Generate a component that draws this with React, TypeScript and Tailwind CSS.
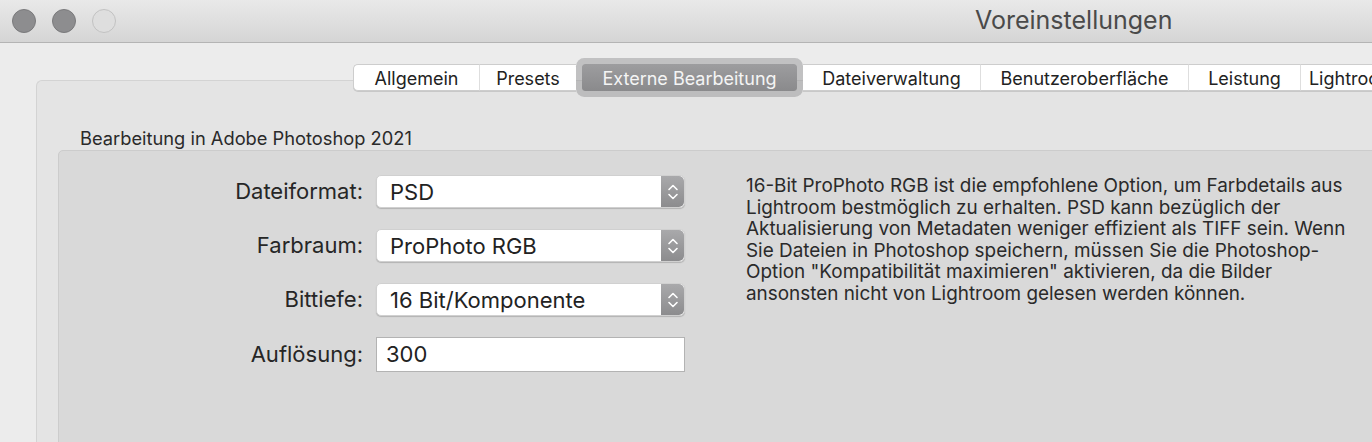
import React from "react";

const tabs: { label: string; w: string; active?: boolean }[] = [
  { label: "Allgemein", w: "w-[126px]" },
  { label: "Presets", w: "w-[97px]" },
  { label: "Externe Bearbeitung", w: "w-[215px]", active: true },
  { label: "Dateiverwaltung", w: "w-[177px]" },
  { label: "Benutzeroberfläche", w: "w-[208px]" },
  { label: "Leistung", w: "w-[112px]" },
  { label: "Lightroom-Synchronisierung", w: "w-[260px]" },
];

function Stepper() {
  return (
    <div className="w-[23px] self-stretch flex items-center justify-center rounded-r-[5px] bg-gradient-to-b from-[#a9a9ab] to-[#8c8c8e]">
      <svg width="12" height="20" viewBox="0 0 12 20" fill="none">
        <path d="M2 7.5 L6 3.5 L10 7.5" stroke="white" strokeWidth="1.6" strokeLinecap="round" strokeLinejoin="round" />
        <path d="M2 12.5 L6 16.5 L10 12.5" stroke="white" strokeWidth="1.6" strokeLinecap="round" strokeLinejoin="round" />
      </svg>
    </div>
  );
}

function Select({ value }: { value: string }) {
  return (
    <div className="w-[309px] h-[33px] flex items-center bg-white rounded-[5px] border border-[#d0d0d0] shadow-[0_1px_1px_rgba(0,0,0,0.18)] overflow-hidden">
      <div className="flex-1 pl-[13px] text-[22px] text-[#222] leading-none">{value}</div>
      <Stepper />
    </div>
  );
}

export default function App() {
  return (
    <div
      className="w-[1372px] h-[442px] overflow-hidden bg-[#ececec] flex flex-col"
      style={{ fontFamily: "Inter, 'Noto Sans', 'Liberation Sans', sans-serif" }}
    >
      {/* Title bar */}
      <div className="h-[43px] shrink-0 flex items-center bg-gradient-to-b from-[#e9e9e9] to-[#d5d5d5] border-b border-[#b4b4b4]">
        <div className="flex items-center gap-[16px] pl-[12px]">
          <div className="w-[24px] h-[24px] rounded-full bg-[#8d8d8f] border border-[#7a7a7c]" />
          <div className="w-[24px] h-[24px] rounded-full bg-[#8d8d8f] border border-[#7a7a7c]" />
          <div className="w-[24px] h-[24px] rounded-full bg-[#dedede] border border-[#c2c2c2]" />
        </div>
        <div className="ml-[859px] text-[25px] text-[#4a4a4a] whitespace-nowrap">
          Voreinstellungen
        </div>
      </div>

      {/* Body */}
      <div className="flex-1 flex flex-col pt-[21px]">
        {/* Tabs */}
        <div className="relative z-10 flex pl-[353px] h-[27px] whitespace-nowrap">
          {tabs.map((t, i) =>
            t.active ? (
              <div key={t.label} className="shrink-0 px-[6px] flex">
                <div
                  className={`${t.w} h-[27px] pt-[1px] flex items-center justify-center rounded-[3px] bg-gradient-to-b from-[#9d9d9f] to-[#8a8a8c] text-[#f4f4f4] text-[18px] shadow-[0_0_0_6px_rgba(150,150,152,0.5)]`}
                >
                  {t.label}
                </div>
              </div>
            ) : (
              <div
                key={t.label}
                className={`${t.w} shrink-0 h-[27px] pt-[1px] flex items-center justify-center bg-white text-[#222] text-[18px] border-y border-[#cdcdcd] shadow-[0_1px_0_rgba(0,0,0,0.12)] ${
                  i === 0 ? "border-l rounded-l-[5px]" : ""
                } ${i !== 0 && !tabs[i - 1].active ? "border-l border-l-[#dedede]" : ""}`}
              >
                {t.label}
              </div>
            )
          )}
        </div>

        {/* Outer tab panel */}
        <div className="-mt-[11px] ml-[36px] flex-1 bg-[#e4e4e4] border-t border-l border-[#d3d3d3] rounded-tl-[6px] pt-[46px] pl-[21px]">
          <div className="pl-[22px] h-[22px] text-[18.3px] leading-[22px] text-[#2a2a2a]">
            Bearbeitung in Adobe Photoshop 2021
          </div>
          <div className="mt-[1px] w-[1400px] h-[400px] bg-[#d9d9d9] border border-[#cccccc] rounded-[5px] pt-[24px] flex items-start">
            {/* Form */}
            <div className="grid grid-cols-[304px_309px] gap-x-[13px] gap-y-[21px] items-center content-start">
              <div className="text-right text-[22px] text-[#262626]">Dateiformat:</div>
              <Select value="PSD" />
              <div className="text-right text-[22px] text-[#262626]">Farbraum:</div>
              <Select value="ProPhoto RGB" />
              <div className="text-right text-[22px] text-[#262626]">Bittiefe:</div>
              <Select value="16 Bit/Komponente" />
              <div className="text-right text-[22px] text-[#262626]">Auflösung:</div>
              <div className="w-[309px] h-[35px] bg-white border border-[#b3b3b3] flex items-center pl-[9px] text-[22px] text-[#222]">
                300
              </div>
            </div>
            {/* Description */}
            <div className="ml-[61px] text-[18.9px] leading-[21.6px] text-[#2a2a2a] whitespace-nowrap">
              16-Bit ProPhoto RGB ist die empfohlene Option, um Farbdetails aus
              <br />
              Lightroom bestmöglich zu erhalten. PSD kann bezüglich der
              <br />
              Aktualisierung von Metadaten weniger effizient als TIFF sein. Wenn
              <br />
              Sie Dateien in Photoshop speichern, müssen Sie die Photoshop-
              <br />
              Option "Kompatibilität maximieren" aktivieren, da die Bilder
              <br />
              ansonsten nicht von Lightroom gelesen werden können.
            </div>
          </div>
        </div>
      </div>
    </div>
  );
}
